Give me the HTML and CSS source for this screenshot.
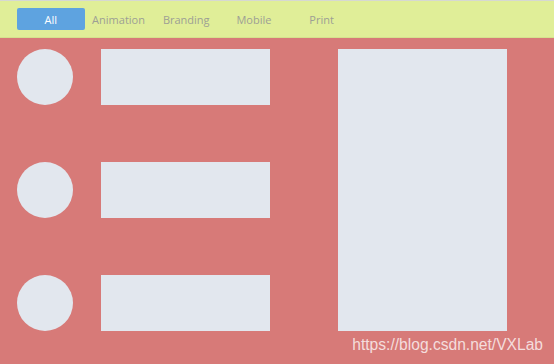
FILE: index.html
```html
<!DOCTYPE html>
<html lang="en">
<head>
    <meta charset="UTF-8">
    <title>Portfolio filter</title>
    <link rel="stylesheet" href="styles.css">
</head>
<body>
    <nav class="filter-bar">
        <button class="filter-btn active">All</button>
        <button class="filter-btn">Animation</button>
        <button class="filter-btn">Branding</button>
        <button class="filter-btn">Mobile</button>
        <button class="filter-btn">Print</button>
    </nav>
    <main class="stage">
        <div class="list">
            <div class="list-row">
                <div class="avatar"></div>
                <div class="block"></div>
            </div>
            <div class="list-row">
                <div class="avatar"></div>
                <div class="block"></div>
            </div>
            <div class="list-row">
                <div class="avatar"></div>
                <div class="block"></div>
            </div>
        </div>
        <div class="panel"></div>
        <span class="watermark">https://blog.csdn.net/VXLab</span>
    </main>
</body>
</html>
```

FILE: styles.css
```css
html, body {
    margin: 0;
    height: 100%;
}
body {
    font-family: 'Open Sans', 'Noto Sans', sans-serif;
    background-color: #d77a78;
    display: flex;
    flex-direction: column;
}
.filter-bar {
    display: flex;
    align-items: center;
    height: 36px;
    padding-left: 17px;
    background-color: #e0ee98;
    border-top: 1px solid #d6d8d2;
    border-bottom: 1px solid #d5e28e;
}
.filter-btn {
    width: 67.7px;
    height: 22px;
    padding: 0;
    border: none;
    border-radius: 2px;
    background: none;
    font-family: inherit;
    font-size: 11px;
    color: #9d9f95;
    cursor: pointer;
}
.filter-btn.active {
    background-color: #5ea3e0;
    color: #fff;
}
.stage {
    position: relative;
    flex: 1;
    display: flex;
    gap: 68px;
    padding: 11px 17px 0;
}
.list {
    display: flex;
    flex-direction: column;
    gap: 57px;
}
.list-row {
    display: flex;
    gap: 28px;
}
.avatar {
    width: 56px;
    height: 56px;
    border-radius: 50%;
    background-color: #e2e7ee;
}
.block {
    width: 169px;
    height: 56px;
    background-color: #e2e7ee;
}
.panel {
    width: 169px;
    height: 282px;
    background-color: #e2e7ee;
}
.watermark {
    position: absolute;
    right: 11px;
    bottom: 10px;
    font-family: 'Liberation Sans', Arial, sans-serif;
    font-size: 15.6px;
    color: rgba(255, 255, 255, 0.75);
}
```
